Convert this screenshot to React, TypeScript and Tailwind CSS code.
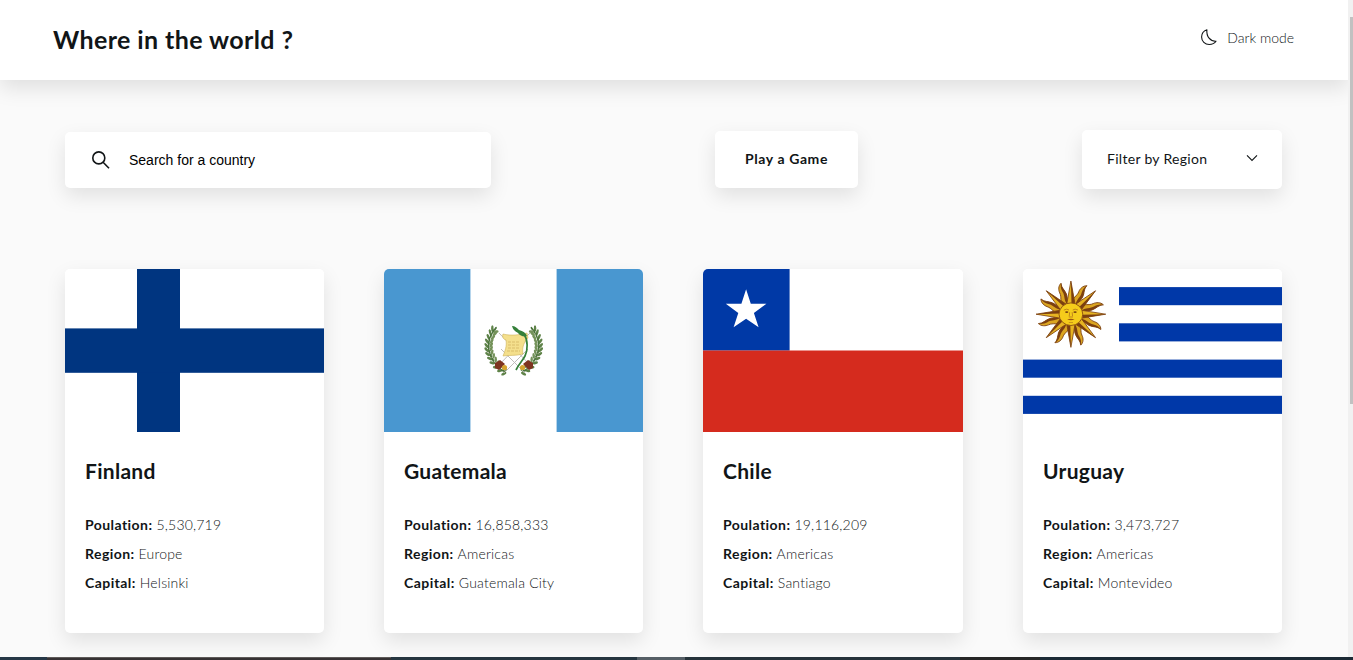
import type { ReactNode } from "react";

function FinlandFlag() {
  return (
    <svg viewBox="0 0 259 163" preserveAspectRatio="none" className="block h-full w-full">
      <rect width="259" height="163" fill="#fff" />
      <rect x="72" width="43" height="163" fill="#003580" />
      <rect y="59.4" width="259" height="44.4" fill="#003580" />
    </svg>
  );
}

const WREATH: [number, number, number][] = [
  [109, 61, 40], [107, 64, 20], [105, 68, 10], [103.5, 72, 0], [103, 76, -5],
  [103, 80, -10], [104, 84, -20], [106, 88, -30], [108.5, 92, -40], [112, 96, -50], [116, 99, -65], [120, 102, -75],
];

function WreathHalf() {
  return (
    <g>
      <path d="M111 59C102 67 100 80 105 88C109 95 115 100 121 103" fill="none" stroke="#6b6a35" strokeWidth="0.9" />
      {WREATH.map(([x, y, r], i) => (
        <g key={i} transform={`translate(${x} ${y}) rotate(${r})`}>
          <ellipse cx="-2.3" cy="-1.5" rx="1.4" ry="3.1" transform="rotate(-38)" fill="#5f8349" />
          <ellipse cx="2.1" cy="-1.5" rx="1.4" ry="2.9" transform="rotate(38)" fill="#74925a" />
          <ellipse cx="0" cy="-1.6" rx="1" ry="2.4" fill="#4a743c" />
        </g>
      ))}
    </g>
  );
}

function GuatemalaFlag() {
  return (
    <svg viewBox="0 0 259 163" preserveAspectRatio="none" className="block h-full w-full">
      <rect width="259" height="163" fill="#fff" />
      <rect width="86.4" height="163" fill="#4997d0" />
      <rect x="172.6" width="86.4" height="163" fill="#4997d0" />
      <g transform="translate(129.7 0) scale(0.9 1) translate(-130.5 0)">
        <WreathHalf />
        <g transform="translate(261 0) scale(-1 1)">
          <WreathHalf />
        </g>
      </g>
      <path d="M115 64l33 34M146 64l-33 34M117 80l24 24M144 80l-24 24" stroke="#b9b5b3" strokeWidth="0.9" />
      <path d="M111 94l5-3 5 4-6 6-4-2zM149 94l-5-3-5 4 6 6 4-2z" fill="#7e3420" />
      <circle cx="120.5" cy="98.5" r="2.6" fill="#d6a52f" />
      <circle cx="138.5" cy="98.5" r="2.6" fill="#d6a52f" />
      <path d="M119 65c8 2 16 1 24-1l1 5c-5 5-6 11-5 16-7 2-14 1-20 2 2-5 4-10 3-16-3-1-4-3-3-6z" fill="#f4df8c" stroke="#cfb45a" strokeWidth="0.6" />
      <path d="M124 73h12M124 76h12M124 79h12M123 82h13" stroke="#c9a956" strokeWidth="0.6" strokeDasharray="3 1" />
      <path d="M128 57c3 0 5 2 7 4 4 1 7 3 8 6-3 1-7 0-9-3-3-2-5-3-6-7z" fill="#35803a" />
      <path d="M140 65c4 6 4 16 1 22-2 4-6 8-9 14" fill="none" stroke="#35803a" strokeWidth="1.7" />
    </svg>
  );
}

function ChileFlag() {
  return (
    <svg viewBox="0 0 260 163" preserveAspectRatio="none" className="block h-full w-full">
      <rect width="260" height="163" fill="#fff" />
      <rect width="86.6" height="81.6" fill="#0039a6" />
      <rect y="81.5" width="260" height="81.5" fill="#d52b1e" />
      <polygon
        fill="#fff"
        points="43.1,20.3 47.8,34.8 63.4,34.8 50.9,44.1 55.6,58.2 43.1,49.7 30.6,58.2 35.3,44.1 22.8,34.8 38.4,34.8"
      />
    </svg>
  );
}

const STRAIGHT = [0, 45, 90, 135, 180, 225, 270, 315];
const WAVY = [22.5, 67.5, 112.5, 157.5, 202.5, 247.5, 292.5, 337.5];

function UruguayFlag() {
  return (
    <svg viewBox="0 0 259 163" preserveAspectRatio="none" className="block h-full w-full">
      <rect width="259" height="163" fill="#fff" />
      <rect x="96" y="18.1" width="163" height="18.1" fill="#0038a8" />
      <rect x="96" y="54.3" width="163" height="18.1" fill="#0038a8" />
      <rect y="90.6" width="259" height="18.1" fill="#0038a8" />
      <rect y="126.8" width="259" height="18.1" fill="#0038a8" />
      <g transform="translate(47.9 45.2) scale(1.04 0.99)">
        {WAVY.map((a) => (
          <g key={a} transform={`rotate(${a})`}>
            <path d="M-3.4-10C-5.7-16-1.2-19-1.7-24-1.8-27-.5-31 3.2-32.5 1.5-28 4-25 3.8-20.5 3.4-16 1.7-15 3.4-10z" fill="#dba520" stroke="#7b3f10" strokeWidth="0.8" />
            <path d="M.7-10C-1.3-16 2.2-19 1.2-24 .9-27 1.2-30 3.2-32.5 1.5-28 4-25 3.8-20.5 3.4-16 1.7-15 3.4-10z" fill="#7b3f10" />
          </g>
        ))}
        {STRAIGHT.map((a) => (
          <g key={a} transform={`rotate(${a})`}>
            <path d="M-4-10L0-33.5 4-10z" fill="#e6b422" stroke="#7b3f10" strokeWidth="0.8" />
            <path d="M.6-10L0-33.5 4-10z" fill="#7b3f10" />
          </g>
        ))}
        <circle r="11.4" fill="#f5cc1b" stroke="#8a4d12" strokeWidth="0.9" />
        <path d="M-6.8-4.2q3-1.8 5 0M6.8-4.2q-3-1.8-5 0M-1.2-2L-1.6 2M1.2-2L1.6 2M-2 2.8h4" fill="none" stroke="#b3761a" strokeWidth="0.8" />
        <ellipse cx="-4" cy="-2.2" rx="1.6" ry="0.9" fill="#75400f" />
        <ellipse cx="4" cy="-2.2" rx="1.6" ry="0.9" fill="#75400f" />
        <path d="M-3.6 5.2q3.6-1 7.2 0-3.6 2-7.2 0z" fill="#9a5510" />
        <path d="M-2 8.4h4" stroke="#c08a18" strokeWidth="0.8" />
      </g>
    </svg>
  );
}

type Country = {
  name: string;
  population: string;
  region: string;
  capital: string;
  flag: ReactNode;
};

const COUNTRIES: Country[] = [
  { name: "Finland", population: "5,530,719", region: "Europe", capital: "Helsinki", flag: <FinlandFlag /> },
  { name: "Guatemala", population: "16,858,333", region: "Americas", capital: "Guatemala City", flag: <GuatemalaFlag /> },
  { name: "Chile", population: "19,116,209", region: "Americas", capital: "Santiago", flag: <ChileFlag /> },
  { name: "Uruguay", population: "3,473,727", region: "Americas", capital: "Montevideo", flag: <UruguayFlag /> },
];

function Fact({ label, value }: { label: string; value: string }) {
  return (
    <p className="flex gap-1 text-sm leading-[29px]">
      <span className="font-bold tracking-[0.44px]">{label}:</span>
      <span className="font-light tracking-[0.2px]">{value}</span>
    </p>
  );
}

function CountryCard({ country }: { country: Country }) {
  return (
    <article className="h-[364px] overflow-hidden rounded-[5px] bg-white shadow-[0_8px_20px_rgba(0,0,0,0.1)]">
      <div className="h-[163px]">{country.flag}</div>
      <div className="px-5 pt-6">
        <h2 className="mb-6 text-[21px] leading-[30px] font-bold tracking-[0.28px]">{country.name}</h2>
        <Fact label="Poulation" value={country.population} />
        <Fact label="Region" value={country.region} />
        <Fact label="Capital" value={country.capital} />
      </div>
    </article>
  );
}

export default function App() {
  return (
    <div className="flex h-[660px] w-[1353px] flex-col overflow-hidden bg-[#fafafa] font-['Lato',sans-serif] text-[#111517]">
      <div className="flex min-h-0 flex-1">
        <div className="min-w-0 flex-1 overflow-hidden">
          <header className="flex h-20 items-start justify-between bg-white pr-[54px] pl-[53px] shadow-[0_8px_20px_rgba(0,0,0,0.11)]">
            <h1 className="pt-[24px] text-[25px] leading-[30px] font-bold tracking-[0.4px]">Where in the world ?</h1>
            <button className="flex items-start pt-7 text-sm leading-5 font-light">
              <svg width="16" height="17" viewBox="0 0 16 17" className="mt-[1px] mr-[10px]" fill="none" stroke="#111517" strokeWidth="1.1" strokeLinejoin="round">
                <path d="M5.9.7C2.6 1.8.6 4.6.6 8c0 4.2 3.4 7.5 7.6 7.5 2.8 0 5.4-1.1 6.8-3.2C9.4 12.6 5.2 7.6 5.9.7z" />
              </svg>
              Dark mode
            </button>
          </header>

          <main className="pr-[66px] pl-[65px]">
            <div className="mt-[50px] flex h-[59px] items-start justify-between">
              <label className="mt-[2px] flex h-14 w-[426px] items-center rounded-[5px] bg-white pl-[26px] shadow-[0_8px_20px_rgba(0,0,0,0.1)]">
                <svg width="20" height="20" viewBox="0 0 20 20" className="mr-[18px] shrink-0" fill="none" stroke="#111517" strokeWidth="1.6">
                  <circle cx="7.8" cy="7.9" r="6" />
                  <path d="M12.1 12.2L18 18.2" />
                </svg>
                <span className="font-['Liberation_Sans',sans-serif] text-sm leading-5 text-black">Search for a country</span>
              </label>
              <button className="mt-[1px] flex h-[57px] w-[143px] justify-center rounded-[5px] bg-white pt-[18px] text-sm leading-5 font-bold tracking-[0.6px] shadow-[0_8px_20px_rgba(0,0,0,0.1)]">
                Play a Game
              </button>
              <button className="flex h-[59px] w-[200px] justify-between rounded-[5px] bg-white pt-[19px] pr-6 pl-[25px] text-sm leading-5 tracking-[0.3px] shadow-[0_8px_20px_rgba(0,0,0,0.1)]">
                Filter by Region
                <svg width="12" height="8" viewBox="0 0 12 8" className="mt-[5px]" fill="none" stroke="#111517" strokeWidth="1.1">
                  <path d="M1 1.4l5 5 5-5" />
                </svg>
              </button>
            </div>

            <section className="mt-20 grid grid-cols-[259px_259px_260px_259px] gap-[60px]">
              {COUNTRIES.map((c) => (
                <CountryCard key={c.name} country={c} />
              ))}
            </section>
          </main>
        </div>
        <div className="w-[5px] bg-[#f1f1f1] pt-[17px] pl-[2px]">
          <div className="h-[387px] bg-[#c1c1c1]" />
        </div>
      </div>
      <footer className="flex h-[3px] bg-[#26343e]">
        <div className="w-[47px] bg-[#263746]" />
        <div className="w-[344px] border-t border-[#5f5b5a] bg-[#373234]" />
        <div className="w-[246px] bg-[#263640]" />
        <div className="w-[48px] bg-[#565f66]" />
        <div className="w-[275px] bg-[#26333b]" />
        <div className="w-[80px] bg-[#262626]" />
        <div className="flex-1 bg-[#1c2a35]" />
      </footer>
    </div>
  );
}
